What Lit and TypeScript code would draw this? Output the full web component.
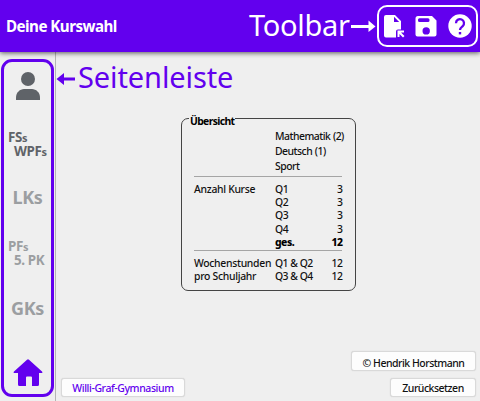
import { LitElement, html, css } from "lit";
import { customElement } from "lit/decorators.js";

@customElement("app-toolbar")
class AppToolbar extends LitElement {
  static styles = css`
    :host { display: flex; height: 52px; box-sizing: border-box; padding-right: 2px; background: #6200ee; color: #fff;
      align-items: center; position: relative; box-shadow: 0 1px 5px rgba(0,0,0,.65); }
    .title { font-size: 15.2px; font-weight: 700; margin-left: 6px; flex: 1; line-height: 20px; padding-bottom: 1px; letter-spacing: -0.55px; white-space: nowrap; }
    .note { font-size: 29px; line-height: 50px; height: 52px; letter-spacing: -0.3px; width: 102px; white-space: nowrap; }
    .arrow { width: 25px; height: 12px; }
    .box { box-sizing: border-box; width: 101px; height: 42px; border: 2px solid #fff; border-radius: 10px; margin-left: 1px; }
    svg { display: block; fill: currentColor; }
  `;
  render() {
    return html`
      <div class="title">Deine Kurswahl</div>
      <div class="note">Toolbar</div>
      <svg class="arrow" viewBox="0 0 25 12"><path d="M0 5h17.500V.5L24.500 6.500 17.500 12V8H0z"/></svg>
      <div class="box">
        <svg width="97" height="38" viewBox="379 7 97 38">
          <path fill-rule="evenodd" d="M386 15h9l6 6v8.500H398a2 2 0 0 0-2 2v6H386a2 2 0 0 1-2-2V17a2 2 0 0 1 2-2zm8 1.800V22h5.200z"/>
          <path d="M397.500 30.500h6.500v2h-3l3.500 3.400-1.500 1.500-3.500-3.400v3h-2z"/>
          <path fill-rule="evenodd" d="M418 16h14l4.500 4.500V34.500a2 2 0 0 1-2 2h-17a2 2 0 0 1-2-2V18.500A2.500 2.500 0 0 1 418 16zm1.500 2.200a1.500 1.500 0 0 0-1.500 1.500v.8a1.500 1.500 0 0 0 1.500 1.500h8.500a1.500 1.500 0 0 0 1.500-1.500v-.8a1.500 1.500 0 0 0-1.500-1.500zm6.700 9a3.700 3.700 0 1 0 0 7.400 3.700 3.700 0 0 0 0-7.400z"/>
          <circle cx="460" cy="26" r="11.700"/>
          <path d="M456 23.200a4 4 0 1 1 6.700 2.900c-1.500 1.300-2.700 2-2.700 4" fill="none" stroke="#6200ee" stroke-width="2.300"/>
          <path d="M458.800 32h2.400v2.400h-2.400z" fill="#6200ee"/>
        </svg>
      </div>`;
  }
}

@customElement("app-sidebar")
class AppSidebar extends LitElement {
  static styles = css`
    :host { display: block; box-sizing: border-box; width: 56px; padding: 7px 1px 4px; border-right: 1px solid #b5b5b5; }
    .rail { box-sizing: border-box; height: 338px; width: 53px; border: 3px solid #6200ee; border-radius: 11px;
      display: flex; flex-direction: column; color: #5f6368; font-weight: 700; white-space: nowrap; }
    svg { display: block; }
    .person { margin: 10px 0 0 11px; }
    .pair { font-size: 13.400px; line-height: 14px; margin: 29px 0 0 4px; height: 28px; letter-spacing: -0.35px; }
    .pair div { height: 14px; }
    .pair div + div { margin-left: 6px; }
    .pair small { font-size: 11px; line-height: 1; }
    .single { font-size: 18px; line-height: 24px; height: 24px; text-align: center; letter-spacing: -0.4px; }
    .off { color: #9b9ea1; }
    .lk { margin-top: 27px; }
    .pf { margin-top: 30px; }
    .gk { margin-top: 29px; }
    .home { margin: 39px 0 0 9px; }
  `;
  render() {
    return html`<div class="rail">
      <svg class="person" width="26" height="29" viewBox="0 0 26 29" fill="#5f6368">
        <circle cx="13" cy="7" r="7"/><path d="M1 28v-2.500C1 20.500 5 17 9 17h8c4 0 8 3.500 8 8.500V28z"/>
      </svg>
      <div class="pair"><div>FS<small>s</small></div><div>WPF<small>s</small></div></div>
      <div class="single off lk">LKs</div>
      <div class="pair off pf"><div>PF<small>s</small></div><div>5. PK</div></div>
      <div class="single off gk">GKs</div>
      <svg class="home" width="30" height="28" viewBox="0 0 30 28" fill="#6200ee">
        <path d="M14 .8q1-.9 2 0l13 11.700q1 1.500-.5 1.500H26v11.500q0 1.500-1.500 1.500H19v-8.500q0-1-1-1h-4q-1 0-1 1V27H6.500Q5 27 5 25.500V14H1.500Q0 14 1 12.500z"/>
      </svg>
    </div>`;
  }
}

@customElement("course-summary")
class CourseSummary extends LitElement {
  static styles = css`
    :host { display: block; box-sizing: border-box; position: relative; width: 175px; height: 173px;
      border: 1px solid #444; border-radius: 7px; padding: 10px 13px 0 12px; font-size: 10.400px; font-weight: 500; color: #111; letter-spacing: -0.5px; white-space: nowrap; }
    .legend { position: absolute; left: 7px; top: -6px; background: #efefef; padding: 0 1px; line-height: 16px; font-weight: 700; color: #000; letter-spacing: -0.65px; }
    .row { display: grid; grid-template-columns: 81px 1fr auto; line-height: 13.200px; }
    .subjects .row { line-height: 15px; }
    .subjects { padding-bottom: 2px; }
    .counts { border-top: 1px solid #a5a5a5; padding: 6px 0 1px; }
    .hours { border-top: 1px solid #a5a5a5; padding-top: 6px; }
    .left { letter-spacing: -0.3px; }
    .hours .mid { letter-spacing: -0.65px; }
    .hours .mid, .subjects .mid { word-spacing: 0.4px; }
    .end { margin-right: -0.5px; }
    .total { font-weight: 800; color: #000; }
  `;
  render() {
    const row = (a: string, b: string, c: string | number, cls = "") =>
      html`<div class="row ${cls}"><span class="left">${a}</span><span class="mid">${b}</span><span class="end">${c}</span></div>`;
    return html`
      <div class="legend">Übersicht</div>
      <div class="subjects">${["Mathematik (2)", "Deutsch (1)", "Sport"].map((s) => row("", s, ""))}</div>
      <div class="counts">
        ${["Q1", "Q2", "Q3", "Q4"].map((q, i) => row(i ? "" : "Anzahl Kurse", q, 3))}
        ${row("", "ges.", 12, "total")}
      </div>
      <div class="hours">${row("Wochenstunden", "Q1 & Q2", 12)}${row("pro Schuljahr", "Q3 & Q4", 12)}</div>`;
  }
}

@customElement("app-root")
class AppRoot extends LitElement {
  static styles = css`
    :host { display: flex; flex-direction: column; width: 480px; height: 401px; overflow: hidden; background: #efefef;
      font-family: "Noto Sans", "Open Sans", sans-serif; }
    .body { display: flex; flex: 1; min-height: 0; }
    main { flex: 1; display: flex; flex-direction: column; }
    .note { display: flex; align-items: center; height: 50px; color: #6200ee; font-size: 29px; letter-spacing: -0.1px; white-space: nowrap; }
    .note span { margin-top: -2px; }
    .note svg { width: 21px; height: 12px; margin-right: 1px; margin-top: 3px; fill: currentColor; }
    course-summary { margin: 16px 0 0 125px; }
    footer { margin-top: auto; padding: 0 4px 4px 5px; display: grid; grid-template-columns: 1fr auto; row-gap: 7px; }
    button { box-sizing: border-box; height: 19px; padding: 0; border: 1px solid #d9d9d9; border-radius: 3px; background: #fdfdfd; color: #111;
      font: 500 10.500px/16px "Noto Sans", sans-serif; letter-spacing: -0.5px; justify-self: end; box-shadow: 0 0 1px #ccc; white-space: nowrap; }
    .credit { grid-column: 2; width: 125px; height: 20px; padding-top: 3px; }
    .school { justify-self: start; width: 124px; color: #6200ee; letter-spacing: -0.42px; }
    .reset { width: 86px; }
  `;
  render() {
    return html`
      <app-toolbar></app-toolbar>
      <div class="body">
        <app-sidebar></app-sidebar>
        <main>
          <div class="note"><svg viewBox="0 0 21 12"><path d="M.5 6 8 0v4.500h11v3H8V12z"/></svg><span>Seitenleiste</span></div>
          <course-summary></course-summary>
          <footer>
            <button class="credit">© Hendrik Horstmann</button>
            <button class="school">Willi-Graf-Gymnasium</button>
            <button class="reset">Zurücksetzen</button>
          </footer>
        </main>
      </div>`;
  }
}
